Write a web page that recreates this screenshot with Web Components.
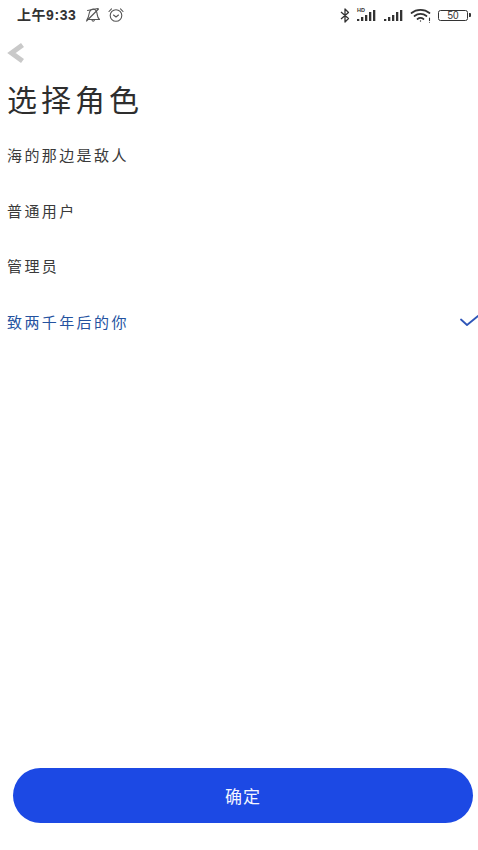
<!DOCTYPE html>
<html lang="zh">
<head>
<meta charset="utf-8">
<title>选择角色</title>
<style>
  html, body { margin: 0; height: 100%; background: #fff; }
  body { font-family: "Noto Sans CJK SC", "Liberation Sans", sans-serif; }
</style>
</head>
<body>
<role-screen>
  <status-bar slot="status"></status-bar>
  <back-button slot="nav"></back-button>
  <h-title slot="title">选择角色</h-title>
  <role-item>海的那边是敌人</role-item>
  <role-item>普通用户</role-item>
  <role-item>管理员</role-item>
  <role-item selected>致两千年后的你</role-item>
  <primary-button slot="action">确定</primary-button>
</role-screen>

<script>
class RoleScreen extends HTMLElement {
  constructor() {
    super()
    this.attachShadow({ mode: "open" }).innerHTML = `<style>
      :host { display: flex; flex-direction: column; height: 850px; background: #fff; color: #2b2b2b; }
      .list { display: flex; flex-direction: column; padding-top: 7px; flex: 1; }
      .action { padding: 0 5px 27px 13px; }
    </style>
    <slot name="status"></slot>
    <slot name="nav"></slot>
    <slot name="title"></slot>
    <div class="list"><slot></slot></div>
    <div class="action"><slot name="action"></slot></div>`
  }
}

class StatusBar extends HTMLElement {
  constructor() {
    super()
    this.attachShadow({ mode: "open" }).innerHTML = `<style>
      :host { display: flex; align-items: center; height: 30px; padding: 0 7px 0 17px; color: #2a2a2a; }
      .time { font: 700 14px/30px "Liberation Sans", "Noto Sans CJK SC", sans-serif; letter-spacing: .55px; color: #333; }
      svg { display: block; flex: none; }
      .left { display: flex; align-items: center; gap: 6px; margin-left: 8px; }
      .right { display: flex; align-items: center; margin-left: auto; gap: 6px; }
      .battery { position: relative; box-sizing: border-box; width: 30px; height: 11px; border: 1.2px solid #333; border-radius: 2.5px; margin-right: 3px;
        font: 10px/9px "Liberation Sans", sans-serif; text-align: center; color: #333; }
      .battery::after { content: ""; position: absolute; right: -4px; top: 2px; width: 2px; height: 4px; background: #333; border-radius: 0 1px 1px 0; }
      .hd { position: relative; }
      .hd span { position: absolute; left: 1px; top: -2px; font: 700 5.5px/6px "Liberation Sans", sans-serif; color: #333; }
    </style>
    <span class="time">上午9:33</span>
    <div class="left">
      <svg width="18" height="16" viewBox="0 0 18 16" fill="none" stroke="#555" stroke-width="1.1" stroke-linecap="round" stroke-linejoin="round">
        <path d="M3 12.5h12.5c-1.6-1.4-2-2.6-2.2-4.6-.3-3-1.2-5.6-4-5.9C6.300 1.800 5.300 5 4.800 8 4.500 10 4 11.300 3 12.500z"/>
        <path d="M8 13.200c.3 1.400 2 1.400 2.400 0"/>
        <path d="M3.500 3.500 14 1.500M2.500 14 14.500 2"/>
      </svg>
      <svg width="16" height="16" viewBox="0 0 16 16" fill="none" stroke="#555" stroke-width="1.1" stroke-linecap="round" stroke-linejoin="round">
        <circle cx="8" cy="8.500" r="5.800"/>
        <path d="M5.500 8l2.500 2 2.500-2"/>
        <path d="M1 4.500 3.500 1.800M15 4.500 12.500 1.800"/>
      </svg>
    </div>
    <div class="right">
      <svg width="10" height="15" viewBox="0 0 10 15" fill="none" stroke="#333" stroke-width="1.300" stroke-linejoin="round">
        <path d="M1 4l7.500 6.500L5 14V1l3.500 3.500L1 11"/>
      </svg>
      <div class="hd">
        <span>HD</span>
        <svg width="21" height="13" viewBox="0 0 21 13" fill="#333">
          <rect x="1" y="10" width="2.300" height="2"/><rect x="5" y="8" width="2.300" height="4"/>
          <rect x="9" y="6" width="2.300" height="6"/><rect x="13" y="3" width="2.300" height="9"/><rect x="17" y="1" width="2.300" height="11"/>
        </svg>
      </div>
      <svg width="21" height="13" viewBox="0 0 21 13" fill="#333">
        <rect x="1" y="10" width="2.300" height="2"/><rect x="5" y="8" width="2.300" height="4"/>
        <rect x="9" y="6" width="2.300" height="6"/><rect x="13" y="3" width="2.300" height="9"/><rect x="17" y="1" width="2.300" height="11"/>
      </svg>
      <svg width="22" height="15" viewBox="0 0 22 15" fill="none" stroke="#333" stroke-width="1.700" stroke-linecap="round">
        <path d="M1.500 5C6.500.8 14.500.8 19.500 5"/>
        <path d="M4.500 8c3.500-2.800 8.500-2.800 12 0"/>
        <path d="M7.500 11c2-1.500 4-1.500 6 0"/>
        <circle cx="10.500" cy="13" r=".7" fill="#333" stroke="none"/>
        <path d="M19.500 10v2.500" stroke-width="1.100"/>
        <circle cx="19.500" cy="14.300" r=".5" fill="#333" stroke="none"/>
      </svg>
      <div class="battery">50</div>
    </div>`
  }
}

class BackButton extends HTMLElement {
  constructor() {
    super()
    this.attachShadow({ mode: "open" }).innerHTML = `<style>
      :host { display: block; height: 46px; padding-left: 7px; }
      svg { display: block; margin-top: 12px; }
    </style>
    <svg width="18" height="22" viewBox="0 0 18 22" fill="none" stroke="#c9c9c9" stroke-width="5">
      <path d="M15.500 3 4.500 11l11 8"/>
    </svg>`
  }
}

class HTitle extends HTMLElement {
  constructor() {
    super()
    this.attachShadow({ mode: "open" }).innerHTML = `<style>
      :host { display: block; padding-left: 7px; font-size: 30px; line-height: 44px; letter-spacing: 4px; color: #2e2e2e; white-space: nowrap; }
    </style><slot></slot>`
  }
}

class RoleItem extends HTMLElement {
  constructor() {
    super()
    this.attachShadow({ mode: "open" }).innerHTML = `<style>
      :host { display: flex; align-items: center; justify-content: space-between; height: 55.500px; padding-left: 7px;
        font-size: 15px; letter-spacing: 2.400px; color: #3a3a3a; }
      :host([selected]) { color: #24529f; }
      svg { display: none; flex: none; }
      :host([selected]) svg { display: block; }
    </style>
    <span><slot></slot></span>
    <svg width="18" height="14" viewBox="0 0 18 14" fill="none" stroke="#2f56b8" stroke-width="1.800" stroke-linecap="round" stroke-linejoin="round">
      <path d="M1 5.500 7 11 18 2"/>
    </svg>`
  }
}

class PrimaryButton extends HTMLElement {
  constructor() {
    super()
    this.attachShadow({ mode: "open" }).innerHTML = `<style>
      :host { display: flex; align-items: center; justify-content: center; height: 55px; border-radius: 28px; background: #1c49e4; color: #f2f5ff;
        font-size: 17px; letter-spacing: 1px; }
    </style><slot></slot>`
  }
}

customElements.define("role-screen", RoleScreen)
customElements.define("status-bar", StatusBar)
customElements.define("back-button", BackButton)
customElements.define("h-title", HTitle)
customElements.define("role-item", RoleItem)
customElements.define("primary-button", PrimaryButton)
</script>
</body>
</html>
